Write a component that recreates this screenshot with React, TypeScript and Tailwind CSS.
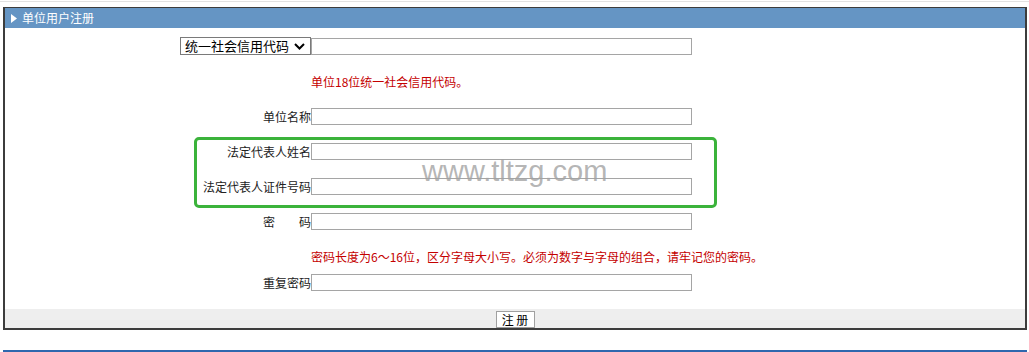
import React from "react";

const Field = ({ label }: { label: string }) => (
  <div className="flex h-[17px] items-center">
    <span className="w-[306px] shrink-0 text-right leading-[17px] text-[#222]">{label}</span>
    <input type="text" className="h-[17px] w-[381px] border border-[#a5a5a5] bg-white outline-none" />
  </div>
);

const Hint = ({ children }: { children: React.ReactNode }) => (
  <div className="flex h-4 items-center">
    <span className="w-[306px] shrink-0" />
    <span className="leading-4 text-[#c40000]">{children}</span>
  </div>
);

export default function App() {
  return (
    <div className="w-[1029px] h-[352px] overflow-hidden bg-white pt-px text-[12px] [font-family:'Noto_Sans_CJK_SC',sans-serif]">
      <div className="h-px bg-[#e2e2e2]" />

      {/* --- REGISTER BOX --- */}
      <div className="relative mt-[5px] ml-[3px] mr-[2px] border-x-2 border-t border-b-2 border-[#3c3c3c]">
        <div className="flex h-5 items-center bg-[#6595c4] pl-[6px] text-white">
          <svg width="6" height="9" viewBox="0 0 6 9" className="mr-[5px]">
            <path d="M0 0 L6 4.5 L0 9 Z" fill="#ffffff" />
          </svg>
          <span className="leading-5">单位用户注册</span>
        </div>

        <div className="flex flex-col pt-[9px] pb-[18px]">
          <div className="flex h-[18px] items-center">
            <div className="flex w-[306px] shrink-0 justify-end">
              <div className="relative h-[18px] w-[131px]">
                <select className="h-[18px] w-full appearance-none border border-[#7a7a7a] bg-white pl-[4px] text-[13px] leading-[16px] text-black outline-none">
                  <option>统一社会信用代码</option>
                  <option>组织机构代码</option>
                </select>
                <svg width="11" height="7" viewBox="0 0 11 7" className="pointer-events-none absolute right-[6px] top-[6px]">
                  <path d="M1 1 L5.5 5.5 L10 1" stroke="#000" strokeWidth="2" fill="none" />
                </svg>
              </div>
            </div>
            <input type="text" className="h-[17px] w-[381px] border border-[#a5a5a5] bg-white outline-none" />
          </div>

          <div className="mt-[19px]">
            <Hint>单位18位统一社会信用代码。</Hint>
          </div>
          <div className="mt-[18px]">
            <Field label="单位名称" />
          </div>
          <div className="mt-[18px]">
            <Field label="法定代表人姓名" />
          </div>
          <div className="mt-[18px]">
            <Field label="法定代表人证件号码" />
          </div>
          <div className="mt-[18px]">
            <Field label="密　　码" />
          </div>
          <div className="mt-[19px]">
            <Hint>密码长度为6～16位，区分字母大小写。必须为数字与字母的组合，请牢记您的密码。</Hint>
          </div>
          <div className="mt-[9px]">
            <Field label="重复密码" />
          </div>
        </div>

        <div className="flex h-[19px] items-start justify-center bg-[#eeeeee] pt-[2px]">
          <button className="h-[17px] w-[39px] border border-[#a0a0a0] bg-white text-[12px] leading-[15px] text-black">
            注 册
          </button>
        </div>

        {/* highlight + watermark overlay */}
        <div className="pointer-events-none absolute left-[189px] top-[129px] h-[71px] w-[523px] rounded-[5px] border-[3px] border-[#3bb33b]" />
        <div className="pointer-events-none absolute left-[417px] top-[147px] text-[29px] leading-[33px] text-[#a2a2a2]/80 [font-family:'Liberation_Sans',Arial,sans-serif]">
          www.tltzg.com
        </div>
      </div>

      <div className="mt-5 ml-[3px] mr-[2px] h-[3px] bg-[#2f67ae]" />
    </div>
  );
}
